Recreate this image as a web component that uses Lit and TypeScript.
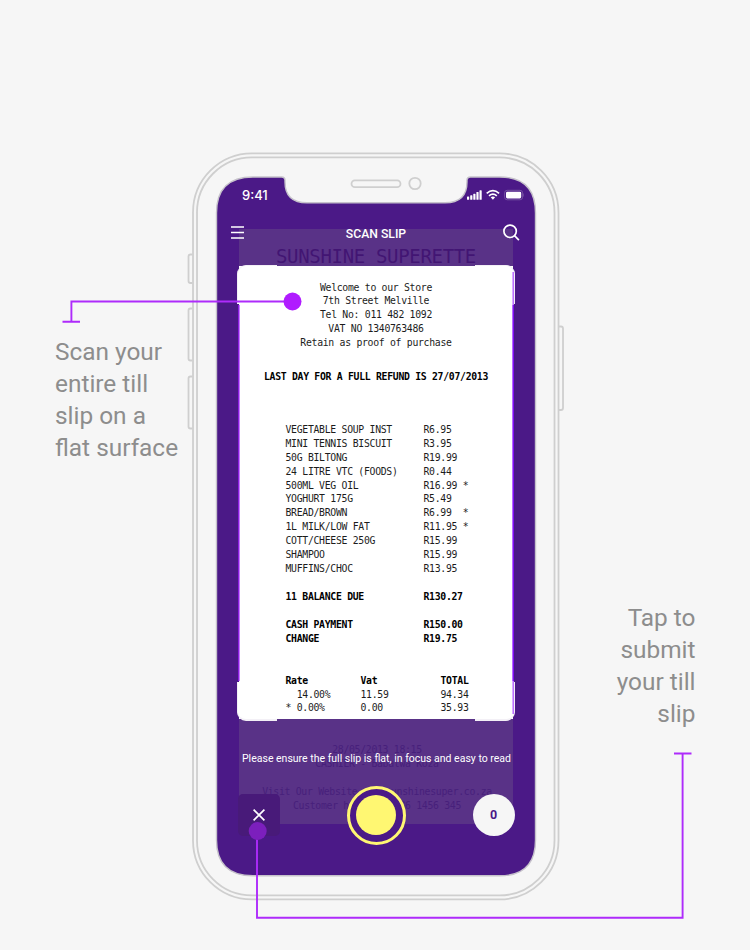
import { LitElement, html, css, svg } from "lit";
import { customElement } from "lit/decorators.js";

const STORE = [
  "Welcome to our Store",
  "7th Street Melville",
  "Tel No: 011 482 1092",
  "VAT NO 1340763486",
  "Retain as proof of purchase",
];

const ITEMS: [string, string][] = [
  ["VEGETABLE SOUP INST", "R6.95"],
  ["MINI TENNIS BISCUIT", "R3.95"],
  ["50G BILTONG", "R19.99"],
  ["24 LITRE VTC (FOODS)", "R0.44"],
  ["500ML VEG OIL", "R16.99 *"],
  ["YOGHURT 175G", "R5.49"],
  ["BREAD/BROWN", "R6.99  *"],
  ["1L MILK/LOW FAT", "R11.95 *"],
  ["COTT/CHEESE 250G", "R15.99"],
  ["SHAMPOO", "R15.99"],
  ["MUFFINS/CHOC", "R13.95"],
];

const TAX = [
  ["  14.00%", "11.59", "94.34"],
  ["* 0.00%", "0.00", "35.93"],
];

@customElement("till-slip")
class TillSlip extends LitElement {
  static styles = css`
    :host {
      display: block;
      width: 274px;
      height: 595px;
      background: #593287;
      font: 9.8px/13.95px "DejaVu Sans Mono", monospace;
      letter-spacing: -0.295px;
      color: #1c1c1c;
      text-align: center;
    }
    .name {
      height: 37px;
      font-size: 19px;
      letter-spacing: -0.33px;
      line-height: 55px;
      color: #421573;
    }
    .window {
      position: relative;
      box-sizing: border-box;
      height: 453px;
      padding-top: 14.5px;
      background: #fff;
    }
    .edge {
      position: absolute;
      top: 39px;
      bottom: 38px;
      width: 2px;
    }
    .edge.l { left: -1px; background: linear-gradient(90deg, #8b1fe0 50%, #c77dff 50%); }
    .edge.r { right: -1px; background: linear-gradient(90deg, #b968ff 50%, #7d10f5 50%); }
    .corner {
      position: absolute;
      box-sizing: border-box;
      width: 40px;
      height: 39px;
      border: 0 solid #f3f0f6;
      background: #fff;
    }
    .tl { left: -2px; top: -1px; border-top-left-radius: 9px; border-top-width: 1px; border-left-width: 1px; }
    .tr { right: -2px; top: -1px; border-top-right-radius: 9px; border-top-width: 1px; border-right-width: 1px; }
    .bl { left: -2px; bottom: -2px; border-bottom-left-radius: 9px; border-bottom-width: 2px; border-left-width: 1px; }
    .br { right: -2px; bottom: -2px; border-bottom-right-radius: 9px; border-bottom-width: 2px; border-right-width: 1px; }
    .glow {
      position: absolute;
      right: -1px;
      width: 2px;
      height: 33px;
      background: linear-gradient(90deg, #d9aeff 50%, #bd70ff 50%);
    }
    .glow.t { top: 6px; }
    .glow.b { bottom: 5px; }
    .text { position: relative; }
    .text span { white-space: pre; }
    .strong { font-weight: bold; color: #000; }
    .notice { margin: 19.5px 0 39px; }
    .items, .tax {
      display: grid;
      grid-template-columns: 138px 1fr;
      text-align: left;
      padding-left: 46.5px;
    }
    .total { margin-top: 14px; }
    .tax { grid-template-columns: 75px 80px 1fr; margin-top: 27.5px; }
    .foot { color: #47207b; padding: 24px 0 0 2px; }
    .gap { height: 13.95px; }
  `;

  render() {
    return html`
      <div class="name">SUNSHINE SUPERETTE</div>
      <div class="window">
        <div class="corner tl"></div><div class="corner tr"></div>
        <div class="corner bl"></div><div class="corner br"></div>
        <div class="edge l"></div><div class="edge r"></div>
        <div class="glow t"></div><div class="glow b"></div>
        <div class="text">
          ${STORE.map((l) => html`<div>${l}</div>`)}
          <div class="notice strong">LAST DAY FOR A FULL REFUND IS 27/07/2013</div>
          <div class="items">
            ${ITEMS.map(([n, p]) => html`<span>${n}</span><span>${p}</span>`)}
          </div>
          <div class="items total strong"><span>11 BALANCE DUE</span><span>R130.27</span></div>
          <div class="items total strong">
            <span>CASH PAYMENT</span><span>R150.00</span><span>CHANGE</span><span>R19.75</span>
          </div>
          <div class="tax">
            <span class="strong">Rate</span><span class="strong">Vat</span><span class="strong">TOTAL</span>
            ${TAX.map((r) => r.map((c) => html`<span>${c}</span>`))}
          </div>
        </div>
      </div>
      <div class="foot">
        <div>28/05/2013 18:15</div>
        <div>CASHIER - Babalwa Koza</div>
        <div class="gap"></div>
        <div>Visit Our Website www.sunshinesuper.co.za</div>
        <div>Customer helpline 086 1456 345</div>
      </div>
    `;
  }
}

@customElement("app-root")
class AppRoot extends LitElement {
  static styles = css`
    :host {
      display: block;
      position: relative;
      box-sizing: border-box;
      width: 750px;
      height: 950px;
      overflow: hidden;
      background: #f6f6f6;
      font-family: Roboto, sans-serif;
    }
    .art { position: absolute; left: 0; top: 0; }
    .page {
      display: grid;
      grid-template-columns: 162px 319px 159.5px;
      padding: 177px 54px 0 55px;
      height: 699px;
    }
    .hint {
      position: relative;
      font-size: 24.4px;
      line-height: 32px;
      color: #8d8d8d;
      white-space: pre;
    }
    .first { padding-top: 159px; }
    .second { padding-top: 425px; text-align: right; }
    .screen { position: relative; display: grid; }
    .screen > * { grid-area: 1 / 1; }
    till-slip { margin: 52px 0 0 22px; }
    .ui {
      position: relative;
      display: flex;
      flex-direction: column;
      color: #fff;
      height: 699px;
    }
    .status {
      display: flex;
      justify-content: space-between;
      align-items: center;
      height: 36px;
      padding: 0 12px 0 25px;
    }
    .time { font: 500 13px/36px Inter, sans-serif; }
    .bar {
      display: flex;
      justify-content: space-between;
      align-items: center;
      height: 40px;
      padding: 0 16px 0 14px;
    }
    .bar svg { margin-bottom: 2px; }
    .title { font-size: 12.2px; font-weight: 500; padding: 1px 0 0 5px; }
    .message {
      margin-top: 498px;
      height: 16px;
      font-size: 10.5px;
      line-height: 16px;
      text-align: center;
      white-space: nowrap;
    }
    .controls {
      display: flex;
      justify-content: space-between;
      align-items: center;
      padding: 19px 21.5px 0 21px;
    }
    .close {
      display: grid;
      place-items: center;
      width: 42px;
      height: 42px;
      border-radius: 5px;
      background: #481a79;
    }
    .shutter {
      box-sizing: border-box;
      width: 59px;
      height: 59px;
      margin: -0.5px 0;
      border: 3px solid #fff772;
      border-radius: 50%;
      padding: 6.5px;
      background: #4b1987;
    }
    .shutter div { height: 100%; border-radius: 50%; background: #fff772; }
    .count {
      width: 42px;
      border-radius: 50%;
      background: #f6f6f6;
      color: #4b1987;
      font-size: 12.5px;
      font-weight: 700;
      line-height: 42px;
      text-align: center;
    }
  `;

  render() {
    const body = svg`
      <g fill="none" stroke="#cfcfcf" stroke-width="1.8">
        <path d="M192.500 254.500h-2a2 2 0 0 0-2 2v24.500a2 2 0 0 0 2 2h2M192.500 308.500h-2a2 2 0 0 0-2 2v48a2 2 0 0 0 2 2h2M192.500 376.500h-2a2 2 0 0 0-2 2v48a2 2 0 0 0 2 2h2M559 326.500h2a2 2 0 0 1 2 2v79.500a2 2 0 0 1-2 2h-2"/>
        <rect x="193" y="153.400" width="365.500" height="746" rx="59"/>
        <rect x="197" y="157.400" width="357.500" height="738" rx="55"/>
        <rect x="351.500" y="180.300" width="49" height="6.800" rx="3.400"/>
        <circle cx="415" cy="183.500" r="5.700"/>
      </g>
      <path fill="#4b1987" stroke="#c6c2cb" stroke-width="1.400"
        d="M253 177H281.500Q285 177 285 180.500V182Q285 202.800 307 202.800H445Q467 202.800 467 182V180.500Q467 177 470.500 177H499.500Q535.500 177 535.500 213V840Q535.500 875.800 499.500 875.800H253Q216.500 875.800 216.500 840V213Q216.500 177 253 177Z"/>`;
    return html`
      <svg class="art" width="750" height="950">${body}</svg>
      <div class="page">
        <div class="hint first">Scan your
entire till
slip on a
flat surface</div>
        <div class="screen">
          <till-slip></till-slip>
          <div class="ui">
            <div class="status">
              <span class="time">9:41</span>
              <svg width="57" height="12" fill="#fff">
                <rect x="0" y="7.500" width="2.200" height="3.300" rx=".6"/><rect x="3.200" y="6.200" width="2.200" height="4.600" rx=".6"/><rect x="6.300" y="4.800" width="2.200" height="6" rx=".6"/><rect x="9.400" y="3" width="2.200" height="7.800" rx=".6"/><rect x="12.500" y="1.300" width="2.200" height="9.500" rx=".6"/>
                <g fill="none" stroke="#fff" stroke-width="1.700"><path d="M19.700 4.300q6.200-5.300 12.400 0M22 6.800q3.900-3.300 7.800 0"/></g>
                <path d="M23.700 8.300q2.200-1.500 4.400 0L25.900 10.700Z"/>
                <rect x="37.600" y="1.300" width="18" height="9.500" rx="2.600" fill="none" stroke="#7450a1"/><rect x="39" y="2.700" width="15.200" height="6.700" rx="1.400"/><path d="M56.300 4.300v3.500q1-.6 1-1.700t-1-1.800" fill="#7450a1"/>
              </svg>
            </div>
            <div class="bar">
              <svg width="13" height="14"><path d="M0 2h13M0 7.500h13M0 13h13" stroke="#fff" stroke-width="1.700"/></svg>
              <span class="title">SCAN SLIP</span>
              <svg width="17" height="17" fill="none" stroke="#fff" stroke-width="1.700"><circle cx="7.100" cy="7.300" r="6.200"/><path d="M11.500 11.700l4.400 4.400"/></svg>
            </div>
            <div class="message">Please ensure the full slip is flat, in focus and easy to read</div>
            <div class="controls">
              <div class="close"><svg width="12" height="12"><path d="M.6.600l10.800 10.800M11.400.600l-10.800 10.800" stroke="#fff" stroke-width="1.700"/></svg></div>
              <div class="shutter"><div></div></div>
              <div class="count">0</div>
            </div>
          </div>
        </div>
        <div class="hint second">Tap to
submit
your till
slip</div>
      </div>
      <svg class="art" width="750" height="950">
        <g fill="none" stroke="#ae2bfb" stroke-width="1.900">
          <path d="M62.500 321.700h17.500M71.400 321.700v-20.200H292M674 753.500h17.500M682.600 753.500v164.200H257V831"/>
        </g>
        <circle cx="292.500" cy="301.500" r="9" fill="#b01cff"/>
        <circle cx="257.700" cy="831" r="9" fill="#7c1fbd"/>
      </svg>
    `;
  }
}
